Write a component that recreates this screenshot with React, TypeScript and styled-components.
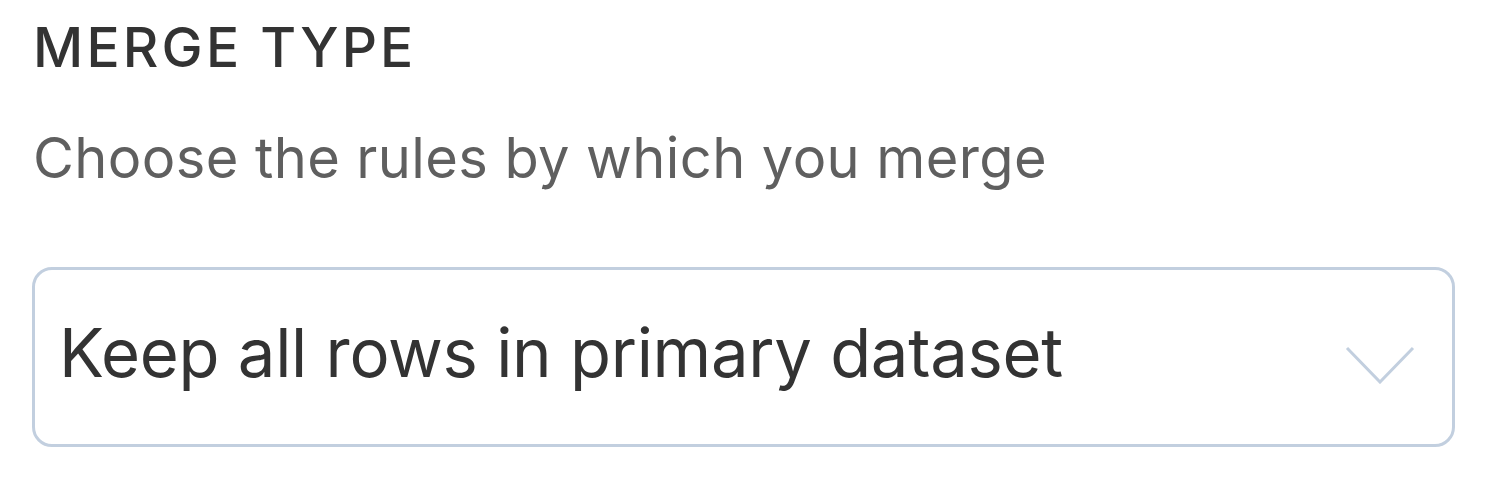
import React from "react";
import styled, { createGlobalStyle } from "styled-components";

const GlobalStyle = createGlobalStyle`
  html, body {
    margin: 0;
    padding: 0;
    background: #fff;
  }
  body {
    font-family: Inter, "Noto Sans", sans-serif;
  }
`;

const Panel = styled.div`
  width: 1508px;
  height: 480px;
  box-sizing: border-box;
  padding: 20px 53px 0 32px;
  display: flex;
  flex-direction: column;
`;

const Label = styled.div`
  padding-left: 1px;
  font-size: 55px;
  line-height: 1;
  font-weight: 500;
  letter-spacing: 3.2px;
  color: #333333;
  text-transform: uppercase;
`;

const Hint = styled.div`
  margin-top: 55px;
  padding-left: 1px;
  font-size: 56px;
  line-height: 1;
  letter-spacing: 0.4px;
  color: #5f5f5f;
`;

const Select = styled.div`
  margin-top: 81px;
  height: 180px;
  box-sizing: border-box;
  border: 3px solid #c2cfdf;
  border-radius: 20px;
  display: flex;
  align-items: center;
  justify-content: space-between;
  padding: 0 37px 10px 24px;
`;

const Value = styled.span`
  font-size: 67px;
  line-height: 1;
  letter-spacing: -0.3px;
  color: #333333;
`;

const Chevron = styled.svg`
  width: 70px;
  height: 38px;
  margin-top: 26px;
  flex-shrink: 0;
`;

const App: React.FC = () => {
  return (
    <>
      <GlobalStyle />
      <Panel>
        <Label>Merge type</Label>
        <Hint>Choose the rules by which you merge</Hint>
        <Select>
          <Value>Keep all rows in primary dataset</Value>
          <Chevron viewBox="0 0 70 38" fill="none">
            <polyline
              points="2,2 35,36 68,2"
              stroke="#c2cfdf"
              strokeWidth="3"
            />
          </Chevron>
        </Select>
      </Panel>
    </>
  );
};

export default App;
